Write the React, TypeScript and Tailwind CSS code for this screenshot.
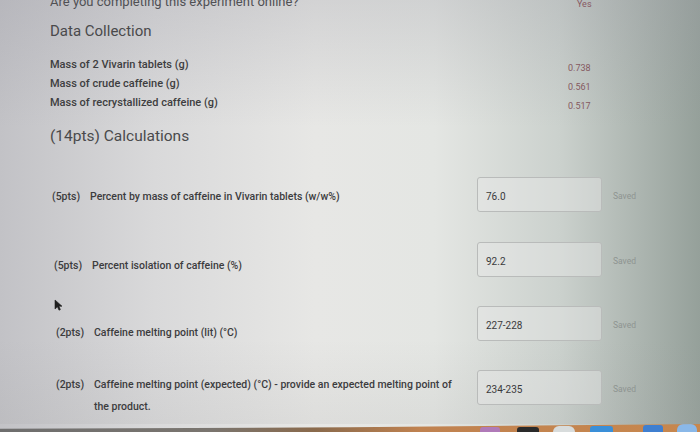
import React from "react";

type Calc = {
  pts: string;
  text: string;
  text2?: string;
  value: string;
  rowMt: string;
  labelPt: string;
  leading: string;
  labelPl: string;
};

const data: [string, string][] = [
  ["Mass of 2 Vivarin tablets (g)", "0.738"],
  ["Mass of crude caffeine (g)", "0.561"],
  ["Mass of recrystallized caffeine (g)", "0.517"],
];

const calcs: Calc[] = [
  {
    pts: "(5pts)",
    text: "Percent by mass of caffeine in Vivarin tablets (w/w%)",
    value: "76.0",
    rowMt: "mt-[31px]",
    labelPt: "pt-[13px]",
    leading: "leading-[14px]",
    labelPl: "pl-[2px]",
  },
  {
    pts: "(5pts)",
    text: "Percent isolation of caffeine (%)",
    value: "92.2",
    rowMt: "mt-[30px]",
    labelPt: "pt-[17px]",
    leading: "leading-[14px]",
    labelPl: "pl-[4px]",
  },
  {
    pts: "(2pts)",
    text: "Caffeine melting point (lit) (\u00B0C)",
    value: "227-228",
    rowMt: "mt-[29px]",
    labelPt: "pt-[20px]",
    leading: "leading-[14px]",
    labelPl: "pl-[6px]",
  },
  {
    pts: "(2pts)",
    text: "Caffeine melting point (expected) (\u00B0C) - provide an expected melting point of",
    text2: "the product.",
    value: "234-235",
    rowMt: "mt-[29px]",
    labelPt: "pt-[8px]",
    leading: "leading-[14px]",
    labelPl: "pl-[6px]",
  },
];

function Cursor() {
  return (
    <svg width="9" height="12" viewBox="0 0 9 12" className="block">
      <path d="M1 1 L1 10 L3.4 7.8 L5 11.2 L6.4 10.6 L4.9 7.3 L8 7.2 Z" fill="#1f1f1f" stroke="#1f1f1f" strokeWidth="0.6" strokeLinejoin="round" />
    </svg>
  );
}

export default function App() {
  return (
    <div
      className="relative w-[700px] h-[432px] overflow-hidden flex flex-col bg-[linear-gradient(90deg,#c2c2c6_0%,#d9d9da_22%,#e7e7e5_45%,#e4e6e3_62%,#cbd1cd_80%,#95a09a_100%)]"
      style={{ fontFamily: "Roboto, 'Liberation Sans', sans-serif" }}
    >
      <div className="flex-1 flex flex-col pl-[50px] bg-[linear-gradient(180deg,rgba(150,150,160,0.25)_0%,rgba(255,255,255,0)_30%,rgba(255,255,255,0)_80%,rgba(150,150,150,0.12)_100%)]">
        {/* cut-off top question */}
        <div className="flex h-[14px] mt-[-5px]">
          <div className="w-[518px] text-[13px] leading-[14px] text-[#505054]">
            Are you completing this experiment online?
          </div>
          <div className="pl-[9px] pt-[2px] text-[9px] leading-[14px] text-[#875862]">Yes</div>
        </div>

        <div className="mt-[12px] text-[15px] leading-[20px] text-[#4a4a4c]">Data Collection</div>

        <div className="mt-[15px] flex flex-col">
          {data.map(([label, val]) => (
            <div key={label} className="flex h-[19px] items-center">
              <div className="w-[518px] text-[11px] font-medium text-[#3e3e40]">{label}</div>
              <div className="translate-y-[3px] text-[9px] text-[#85585f]">{val}</div>
            </div>
          ))}
        </div>

        <div className="mt-[13px] text-[15.5px] leading-[20px] text-[#4a4a4c]">(14pts) Calculations</div>

        {calcs.map((c, i) => (
          <div key={i} className={`flex ${c.rowMt}`}>
            <div className={`w-[427px] flex ${c.labelPt} ${c.labelPl} ${c.leading} text-[10.5px] font-medium text-[#3c3c3e]`}>
              <span className="w-[38px] shrink-0">{c.pts}</span>
              <span className="flex flex-col">
                <span>{c.text}</span>
                {c.text2 && <span className="mt-[8px]">{c.text2}</span>}
              </span>
            </div>
            <div className="w-[125px] h-[35px] shrink-0 rounded-[3px] border border-[#b9bbba] bg-[#eaebea]/40 flex items-center pl-[8px] pt-[3px] text-[10px] text-[#3a3a3c]">
              {c.value}
            </div>
            <div className="ml-[11px] h-[35px] flex items-center pt-[3px] text-[8.5px] text-[#8e9491]">Saved</div>
          </div>
        ))}
      </div>

      {/* cursor */}
      <div className="absolute left-[54px] top-[299px]">
        <Cursor />
      </div>

      {/* bottom dock strip */}
      <div className="relative h-[8px] shrink-0 bg-[linear-gradient(90deg,#6e6e6e_0%,#7a756f_30%,#8a6a4c_45%,#c08250_60%,#c7874e_100%)] [clip-path:polygon(0_60%,50%_40%,100%_0,100%_100%,0_100%)]">
        <div className="absolute left-[480px] top-[3px] w-[20px] h-[6px] rounded-t-[3px] bg-[#b07ab8]" />
        <div className="absolute left-[517px] top-[3px] w-[22px] h-[6px] rounded-t-[3px] bg-[#2a2a2a]" />
        <div className="absolute left-[553px] top-[2px] w-[22px] h-[7px] rounded-t-[6px] bg-[#d8dcdc]" />
        <div className="absolute left-[590px] top-[2px] w-[23px] h-[7px] rounded-t-[3px] bg-[#3a8fd8]" />
        <div className="absolute left-[643px] top-[1px] w-[20px] h-[8px] rounded-t-[3px] bg-[#3f7fd0]" />
        <div className="absolute left-[677px] top-[0px] w-[20px] h-[9px] rounded-t-[6px] bg-[#8ab8e8]" />
      </div>
    </div>
  );
}
